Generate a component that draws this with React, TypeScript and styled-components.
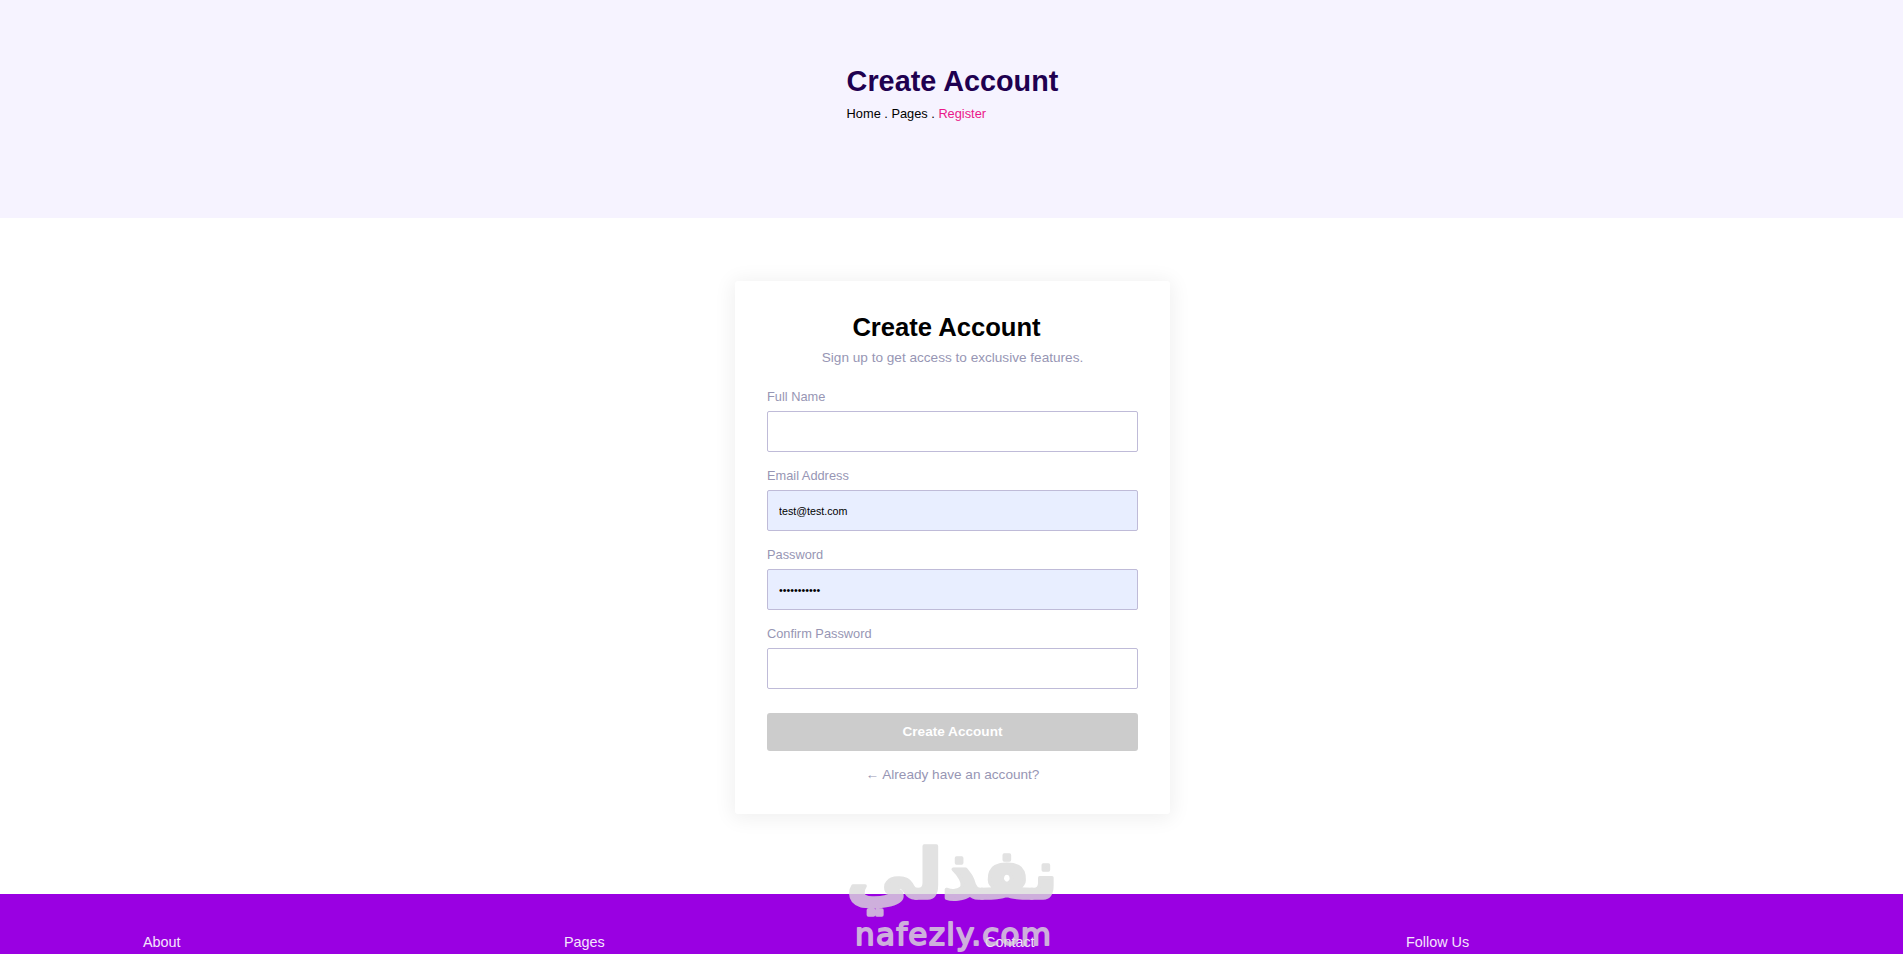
import { useState } from "react";
import styled, { createGlobalStyle } from "styled-components";

const GlobalStyle = createGlobalStyle`
  * {
    box-sizing: border-box;
    margin: 0;
    padding: 0;
  }
  body {
    font-family: "Liberation Sans", Arial, sans-serif;
    font-size: 16px;
    color: #000;
    background: #fff;
    overflow: hidden;
  }
`;

const Page = styled.div`
  display: flex;
  flex-direction: column;
  width: 1905px;
  height: 954px;
  overflow: hidden;
`;

const Hero = styled.header`
  display: flex;
  justify-content: center;
  height: 218px;
  padding-top: 64px;
  background: #f6f3ff;
`;

const HeroTitle = styled.h1`
  font-size: 28.8px;
  line-height: 34px;
  color: #1f0050;
`;

const Breadcrumb = styled.p`
  margin-top: 8px;
  font-size: 12.8px;
  line-height: 15px;

  span {
    color: #ea1789;
  }
`;

const Main = styled.main`
  display: flex;
  justify-content: center;
  align-items: flex-start;
  height: 676px;
  padding-top: 63px;
`;

const Card = styled.form`
  display: flex;
  flex-direction: column;
  width: 435px;
  height: 533px;
  padding: 32px;
  border-radius: 3px;
  background: #fff;
  box-shadow: 0 2px 20px 3px #f0f0f0;
`;

const CardTitle = styled.h2`
  padding-right: 12px;
  font-size: 25.6px;
  line-height: 29px;
  text-align: center;
`;

const CardText = styled.p`
  margin-top: 8px;
  font-size: 13.6px;
  line-height: 16px;
  text-align: center;
  color: #9796b4;
`;

const LoginLink = styled.a`
  margin-top: 16px;
  font-size: 13.6px;
  line-height: 16px;
  text-align: center;
  color: #9796b4;
`;

const Field = styled.div`
  display: flex;
  flex-direction: column;
  margin-bottom: 16px;

  label {
    height: 22px;
    font-size: 12.8px;
    line-height: 15px;
    color: #9796b4;
  }
`;

const Fields = styled.div`
  margin-top: 23px;
`;

const Input = styled.input<{ $filled?: boolean }>`
  height: 41px;
  padding: 0 11px;
  border: 1px solid #bfbbd8;
  border-radius: 2px;
  outline: none;
  font-family: inherit;
  font-size: 10.7px;
  background: ${(props) => (props.$filled ? "#e8eeff" : "#fff")};
`;

const Submit = styled.button`
  flex-shrink: 0;
  height: 38px;
  margin-top: 8px;
  padding-bottom: 2px;
  border: none;
  border-radius: 3px;
  font-family: inherit;
  font-size: 13.6px;
  font-weight: bold;
  color: #fff;
  background: #ccc;
`;

const Footer = styled.footer`
  display: grid;
  grid-template-columns: repeat(4, 421px);
  height: 60px;
  padding: 40px 0 0 143px;
  background: #9a00e2;
  color: #f5e5fc;
  font-size: 14.4px;
  line-height: 17px;
`;

// stays on top of the page, like the site stamp
const Watermark = styled.svg`
  position: absolute;
  left: 840px;
  top: 834px;
  opacity: 0.8;
  pointer-events: none;
`;

const fields = [
  { name: "fullname", label: "Full Name", type: "text", value: "" },
  { name: "email", label: "Email Address", type: "text", value: "test@test.com" },
  { name: "password", label: "Password", type: "password", value: "password123" },
  { name: "confirm", label: "Confirm Password", type: "password", value: "" },
];

const FormField = ({ field }: any) => {
  const [value, setValue] = useState(field.value);

  return (
    <Field>
      <label htmlFor={field.name}>{field.label}</label>
      <Input
        id={field.name}
        type={field.type}
        value={value}
        $filled={field.value !== ""}
        onChange={(e) => setValue(e.target.value)}
      />
    </Field>
  );
};

const App = () => {
  return (
    <>
      <GlobalStyle />
      <Page>
        <Hero>
          <div>
            <HeroTitle>Create Account</HeroTitle>
            <Breadcrumb>
              Home . Pages . <span>Register</span>
            </Breadcrumb>
          </div>
        </Hero>
        <Main>
          <Card>
            <CardTitle>Create Account</CardTitle>
            <CardText>Sign up to get access to exclusive features.</CardText>
            <Fields>
              {fields.map((f) => (
                <FormField key={f.name} field={f} />
              ))}
            </Fields>
            <Submit type="button">Create Account</Submit>
            <LoginLink>← Already have an account?</LoginLink>
          </Card>
        </Main>
        <Footer>
          <p>About</p>
          <p>Pages</p>
          <p>Contact</p>
          <p>Follow Us</p>
        </Footer>
      </Page>
      <Watermark
        width="226"
        height="120"
        fill="#dbdbdb"
        stroke="#dbdbdb"
        strokeLinejoin="round"
      >
        <text
          x="112"
          y="64"
          textAnchor="middle"
          direction="rtl"
          fontFamily="DejaVu Sans, sans-serif"
          fontWeight="bold"
          fontSize="69"
          strokeWidth="3.5"
        >
          نفذلي
        </text>
        <text
          x="15"
          y="111"
          fontFamily="DejaVu Sans, sans-serif"
          fontSize="31"
          strokeWidth="1.8"
          textLength="196"
          lengthAdjust="spacing"
        >
          nafezly.com
        </text>
      </Watermark>
    </>
  );
};

export default App;
